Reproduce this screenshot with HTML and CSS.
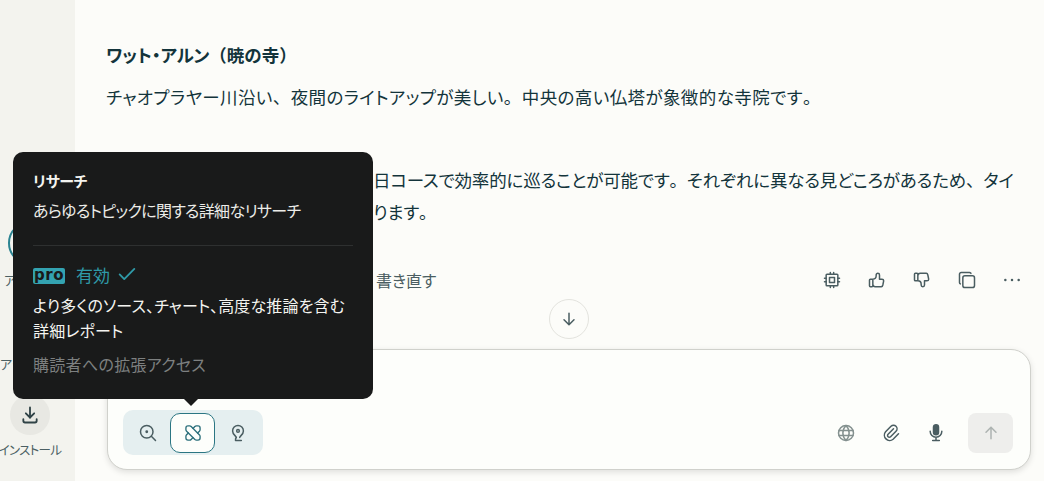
FILE: index.html
```html
<!DOCTYPE html>
<html lang="ja">
<head>
<meta charset="utf-8">
<title>リサーチ</title>
<link rel="stylesheet" href="styles.css">
</head>
<body>
<div class="app">
  <aside class="sidebar">
    <div class="side-item side-account">
      <span class="avatar"></span>
      <span class="side-label side-peek">ア</span>
    </div>
    <div class="side-item side-upgrade">
      <span class="side-label">アッ</span>
    </div>
    <div class="side-item side-install">
      <span class="install-btn">
        <svg class="ic ic-install" viewBox="0 0 24 24"><path d="M4 17v2a2 2 0 0 0 2 2h12a2 2 0 0 0 2-2v-2"/><path d="M7 10l5 5 5-5"/><path d="M12 3v12"/></svg>
      </span>
      <span class="side-label side-install-label">インストール</span>
    </div>
  </aside>
  <main class="main">
    <article class="answer">
      <h3 class="answer-head">ワット・アルン<span class="fw">（暁の寺）</span></h3>
      <p class="answer-p answer-first">チャオプラヤー川沿い<span class="fw">、</span>夜間のライトアップが美しい<span class="fw">。</span>中央の高い仏塔が象徴的な寺院です<span class="fw">。</span></p>
      <p class="answer-p answer-sum">日コースで効率的に巡ることが可能です<span class="fw">。</span>それぞれに異なる見どころがあるため<span class="fw">、</span>タイ<br>ります<span class="fw">。</span></p>
    </article>
    <div class="toolbar">
      <span class="rewrite">書き直す</span>
      <div class="tools">
        <svg class="ic" viewBox="0 0 24 24"><rect x="5" y="5" width="14" height="14" rx="1"/><rect x="9" y="9" width="6" height="6"/><path d="M3 10h2M3 14h2M10 3v2M14 3v2M21 10h-2M21 14h-2M14 21v-2M10 21v-2"/></svg>
        <svg class="ic" viewBox="0 0 24 24"><path d="M7 11v8a1 1 0 0 1-1 1H4a1 1 0 0 1-1-1v-7a1 1 0 0 1 1-1h3a4 4 0 0 0 4-4V6a2 2 0 0 1 4 0v5h3a2 2 0 0 1 2 2l-1 5a2 3 0 0 1-2 2h-7a3 3 0 0 1-3-3"/></svg>
        <svg class="ic" viewBox="0 0 24 24"><path d="M7 13V5a1 1 0 0 0-1-1H4a1 1 0 0 0-1 1v7a1 1 0 0 0 1 1h3a4 4 0 0 1 4 4v1a2 2 0 0 0 4 0v-5h3a2 2 0 0 0 2-2l-1-5a2 3 0 0 0-2-2h-7a3 3 0 0 0-3 3"/></svg>
        <svg class="ic" viewBox="0 0 24 24"><rect x="7" y="7" width="14" height="14" rx="2.500"/><path d="M4 16.700A2 2 0 0 1 3 15V5a2 2 0 0 1 2-2h10c.75 0 1.200.4 1.700 1"/></svg>
        <svg class="ic" viewBox="0 0 24 24"><path d="M4 12h.01M12 12h.01M20 12h.01" class="dots"/></svg>
      </div>
    </div>
    <div class="scroll-row">
      <span class="scroll-btn">
        <svg class="ic" viewBox="0 0 24 24"><path d="M12 5v14M18 13l-6 6-6-6"/></svg>
      </span>
    </div>
    <section class="composer">
      <div class="composer-input"></div>
      <div class="composer-bar">
        <div class="modes">
          <span class="mode">
            <svg class="ic" viewBox="0 0 24 24"><circle cx="10.500" cy="10.500" r="7.500"/><path d="M21 21l-5-5"/><circle class="fill" cx="10.500" cy="10.500" r=".8"/></svg>
          </span>
          <span class="mode mode-on">
            <svg class="ic" viewBox="0 0 24 24"><path d="M3.500 6c0-1.500 1-2.500 2.500-2.500h2c.8 0 1.300.3 1.800.8l10 10c.4.500.7 1 .7 1.700v2c0 1.500-1 2.500-2.500 2.500h-2c-.7 0-1.200-.3-1.700-.7l-10-10c-.5-.5-.8-1-.8-1.800z"/><path d="M12 6.500l2.200-2.200c.5-.5 1-.8 1.800-.8h2c1.500 0 2.500 1 2.500 2.500v2c0 .8-.3 1.300-.8 1.800L17.500 12"/><path d="M12 17.500l-2.200 2.200c-.5.5-1 .8-1.800.8H6c-1.500 0-2.500-1-2.500-2.500v-2c0-.8.3-1.300.8-1.800L6.500 12"/></svg>
          </span>
          <span class="mode">
            <svg class="ic" viewBox="0 0 24 24"><path d="M10 17.500c0-2-4.500-3.500-4.500-8a6.500 6.500 0 0 1 13 0c0 4.500-4.500 6-4.500 8"/><path d="M10 17.500c-1 1-1.200 2-1 3.500h7"/><circle cx="12" cy="9.500" r="1.600"/></svg>
          </span>
        </div>
        <div class="actions">
          <svg class="ic ic-muted" viewBox="0 0 24 24"><circle cx="12" cy="12" r="9"/><path d="M3.600 9h16.800M3.600 15h16.800M12 3c-5 5-5 13 0 18M12 3c5 5 5 13 0 18"/></svg>
          <svg class="ic" viewBox="0 0 24 24"><path d="M15 7l-6.500 6.500a2.100 2.100 0 0 0 3 3L18 10a4.200 4.200 0 0 0-6-6l-6.500 6.500a6.400 6.400 0 0 0 9 9L21 13"/></svg>
          <svg class="ic" viewBox="0 0 24 24"><rect class="fill" x="9" y="2" width="6" height="12" rx="3"/><path d="M5 10a7 7 0 0 0 14 0M8 21h8M12 17v4"/></svg>
          <span class="send">
            <svg class="ic" viewBox="0 0 24 24"><path d="M12 5v14M18 11l-6-6-6 6"/></svg>
          </span>
        </div>
      </div>
    </section>
  </main>
</div>
<div class="tip">
  <div class="tip-head">
    <div class="tip-title">リサーチ</div>
    <div class="tip-sub">あらゆるトピックに関する詳細なリサーチ</div>
  </div>
  <div class="tip-body">
    <div class="tip-status">
      <span class="pro">pro</span>
      <span class="tip-active">有効</span>
      <svg class="tip-check" viewBox="0 0 24 24"><path d="M4 12.500l5 5L20 6.500"/></svg>
    </div>
    <div class="tip-desc">より多くのソース、チャート、高度な推論を含む詳細レポート</div>
    <div class="tip-foot">購読者への拡張アクセス</div>
  </div>
</div>
</body>
</html>
```
FILE: styles.css
```css
* { box-sizing: border-box; }
html, body { margin: 0; height: 100%; overflow: hidden; }
body {
  font-family: "Noto Sans CJK JP", "Noto Sans", sans-serif;
  font-feature-settings: "palt";
  color: #13343b;
  background: #fcfcf9;
}
.app { display: flex; height: 481px; }
.sidebar {
  width: 75px;
  flex: none;
  background: #f3f3ee;
  position: relative;
  overflow: hidden;
}
.side-item {
  width: 60px;
  display: flex;
  flex-direction: column;
  align-items: center;
  white-space: nowrap;
  position: absolute;
  left: 0;
}
.side-account { top: 221px; }
.side-upgrade { top: 355px; align-items: flex-start; }
.side-install { top: 395px; }
.side-label { font-size: 13px; line-height: 18px; color: #4b5f63; }
.side-peek { align-self: flex-start; margin-left: 4px; }
.side-install-label { font-size: 12.500px; letter-spacing: -.7px; }
.avatar { width: 44px; height: 44px; border: 2px solid #2a8391; border-radius: 50%; margin-bottom: 6px; }
.install-btn {
  width: 40px; height: 40px; border-radius: 50%;
  background: #e8e8e3;
  display: flex; align-items: center; justify-content: center;
  margin-bottom: 6px;
}
.ic {
  width: 20px; height: 20px; flex: none;
  fill: none; stroke: #4a5d61; stroke-width: 1.800;
  stroke-linecap: round; stroke-linejoin: round;
}
.ic .fill { fill: #4a5d61; stroke: #4a5d61; }
.ic .dots { stroke-width: 3; }
.ic-muted { stroke: #84918f; }
.ic-install { stroke: #2f4246; stroke-width: 2.200; }
.main {
  flex: 1;
  display: flex;
  flex-direction: column;
  padding: 0 13px 11px 32px;
  min-width: 0;
}
.answer { padding: 43px 0 0; height: 263px; margin-left: -1px; }
.fw { font-feature-settings: normal; }
.answer-head { margin: 0; font-size: 17.500px; font-weight: 700; line-height: 24px; }
.answer-p { margin: 0; font-size: 17.500px; line-height: 33px; }
.answer-first { margin-top: 16px; line-height: 28px; letter-spacing: .4px; }
.answer-sum { margin-top: 53px; padding-left: 267px; line-height: 32px; letter-spacing: -.17px; white-space: nowrap; }
.toolbar { display: flex; align-items: center; justify-content: space-between; height: 36px; padding: 0 9px 0 269px; }
.rewrite { font-size: 16px; color: #4a5d61; }
.tools { display: flex; gap: 25px; }
.scroll-row { display: flex; justify-content: center; margin-top: 1px; }
.scroll-btn {
  width: 40px; height: 40px; border-radius: 50%;
  border: 1px solid #e3e3de; background: #fcfcf9;
  display: flex; align-items: center; justify-content: center;
}
.composer {
  margin-top: 10px;
  height: 121px;
  background: #fdfefb;
  border: 1px solid #d0d1cc;
  border-radius: 20px;
  box-shadow: 0 2px 6px rgba(0,0,0,.12);
  display: flex;
  flex-direction: column;
  justify-content: flex-end;
  padding: 0 17px 14px 15px;
}
.composer-bar { display: flex; justify-content: space-between; align-items: center; }
.modes { display: flex; align-items: center; background: #e5eff0; border-radius: 10px; padding: 3px 3px 3px 2px; height: 45px; width: 140px; }
.mode { height: 40px; flex: 1; display: flex; align-items: center; justify-content: center; border-radius: 10px; border: 1px solid transparent; }
.mode-on { background: #fdfefb; border-color: #2b7683; }
.mode-on .ic { stroke: #2b6f7b; stroke-width: 1.600; }
.actions { display: flex; align-items: center; gap: 25px; }
.send { width: 45px; height: 40px; margin-left: -3px; background: #eeeeec; border-radius: 8px; display: flex; align-items: center; justify-content: center; }
.send .ic { stroke: #adb3b1; }
.tip {
  position: absolute;
  left: 13px; top: 152px;
  width: 360px; height: 247px;
  background: #191a1a;
  border-radius: 10px;
  padding: 17px 20px;
  color: #f4f4f0;
}
.tip::after {
  content: "";
  position: absolute;
  left: 171px; top: 100%;
  border: 7px solid transparent;
  border-top-color: #191a1a;
  border-bottom-width: 0;
}
.tip-head { border-bottom: 1px solid #2e3030; padding-bottom: 23px; }
.tip-title { font-size: 15px; font-weight: 700; line-height: 24px; letter-spacing: -.4px; }
.tip-sub { font-size: 16px; line-height: 24px; margin-top: 5px; color: #ecece8; letter-spacing: -.65px; }
.tip-body { padding-top: 15px; }
.tip-status { display: flex; align-items: center; height: 26px; gap: 11px; color: #2f9aa8; font-size: 17px; }
.pro {
  font-family: "DejaVu Sans", sans-serif;
  font-feature-settings: normal;
  font-weight: 700; font-size: 15px; line-height: 14px; letter-spacing: .6px;
  background: #33a3b1; color: #191a1a;
  width: 32px; height: 16px; border-radius: 2px; margin-top: 4px;
  text-align: center;
}
.tip-check { width: 22px; height: 22px; margin-left: -5px; fill: none; stroke: #2f9aa8; stroke-width: 2; stroke-linecap: round; stroke-linejoin: round; }
.tip-desc { font-size: 16px; line-height: 25px; margin-top: 6px; letter-spacing: .14px; }
.tip-foot { font-size: 16px; line-height: 22px; margin-top: 10px; color: #7d8080; letter-spacing: .3px; }
```
